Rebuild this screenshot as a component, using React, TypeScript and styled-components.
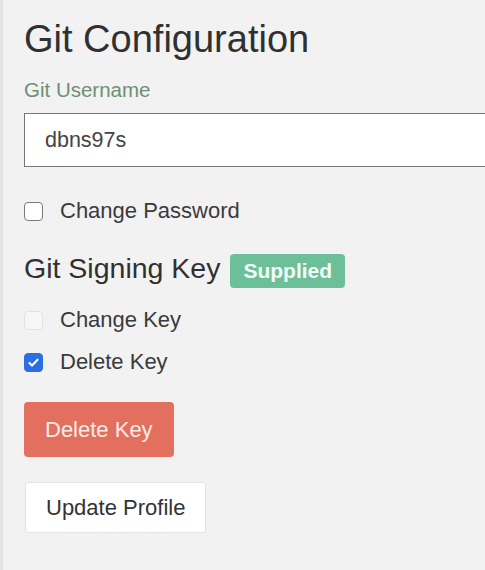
import React from 'react';
import styled, { createGlobalStyle } from 'styled-components';

const GlobalStyle = createGlobalStyle`
  html, body {
    margin: 0;
    padding: 0;
    background: #f2f2f2;
  }
  body {
    font-family: "Liberation Sans", Arial, sans-serif;
    color: #333;
  }
`;

const Page = styled.div`
  min-height: 570px;
  box-sizing: border-box;
  border-left: 3px solid #e3e3e3;
  padding: 17px 0 0 21px;
  display: flex;
  flex-direction: column;
  align-items: flex-start;
  overflow: hidden;
`;

const Title = styled.h1`
  margin: 0;
  font-size: 38px;
  line-height: 44px;
  font-weight: 400;
  color: #303030;
`;

const FieldLabel = styled.label`
  margin-top: 17px;
  font-size: 20.5px;
  line-height: 24px;
  color: #6f8f72;
`;

const TextInput = styled.input`
  margin-top: 11px;
  box-sizing: border-box;
  width: 500px;
  height: 54px;
  padding: 0 20px;
  border: 1.5px solid #6f7d70;
  border-right: none;
  background: #fff;
  font-family: inherit;
  font-size: 21.5px;
  color: #444;
  outline: none;
`;

const CheckRow = styled.label<{ $top: number }>`
  margin-top: ${(p) => p.$top}px;
  display: flex;
  align-items: center;
  gap: 17px;
  font-size: 22px;
  line-height: 26px;
  color: #3a3a3a;
  cursor: pointer;
`;

const Box = styled.span<{ $checked?: boolean; $disabled?: boolean }>`
  width: 19px;
  height: 19px;
  box-sizing: border-box;
  border-radius: 4px;
  display: flex;
  align-items: center;
  justify-content: center;
  border: 1.5px solid
    ${(p) => (p.$checked ? '#2a6ee0' : p.$disabled ? '#e2e2e2' : '#7a7a7a')};
  background: ${(p) => (p.$checked ? '#2a6ee0' : p.$disabled ? '#f7f7f7' : '#fff')};
`;

const SectionHead = styled.div`
  margin-top: 24px;
  display: flex;
  align-items: center;
  gap: 10px;
`;

const SubTitle = styled.h2`
  margin: 0;
  font-size: 28.5px;
  line-height: 34px;
  font-weight: 400;
  color: #303030;
`;

const Badge = styled.span`
  margin-top: 6px;
  height: 34px;
  padding: 0 13px;
  display: inline-flex;
  align-items: center;
  border-radius: 4px;
  background: #6cbf98;
  color: #f2fff8;
  font-weight: 700;
  font-size: 21px;
`;

const Button = styled.button<{ $variant: 'danger' | 'plain'; $top: number }>`
  margin-top: ${(p) => p.$top}px;
  box-sizing: border-box;
  font-family: inherit;
  font-size: 22px;
  cursor: pointer;
  ${(p) =>
    p.$variant === 'danger'
      ? `
    height: 55px;
    padding: 0 21px;
    border: none;
    border-radius: 4px;
    background: #e3705f;
    color: #fdebe4;
  `
      : `
    margin-left: 1px;
    height: 51px;
    padding: 0 20px;
    border: 1px solid #e4e4e4;
    border-radius: 2px;
    background: #fff;
    color: #333;
  `}
`;

function Check() {
  return (
    <svg width="13" height="13" viewBox="0 0 16 16">
      <path d="M3 8.5l3.2 3.2L13 4.5" fill="none" stroke="#fff" strokeWidth="2.6" strokeLinecap="round" strokeLinejoin="round" />
    </svg>
  );
}

function Checkbox(props: { label: string; checked?: boolean; disabled?: boolean; top: number }) {
  return (
    <CheckRow $top={props.top}>
      <Box $checked={props.checked} $disabled={props.disabled}>
        {props.checked && <Check />}
      </Box>
      {props.label}
    </CheckRow>
  );
}

export default function App() {
  return (
    <>
      <GlobalStyle />
      <Page>
        <Title>Git Configuration</Title>
        <FieldLabel>Git Username</FieldLabel>
        <TextInput defaultValue="dbns97s" />
        <Checkbox label="Change Password" top={31} />
        <SectionHead>
          <SubTitle>Git Signing Key</SubTitle>
          <Badge>Supplied</Badge>
        </SectionHead>
        <Checkbox label="Change Key" disabled top={19} />
        <Checkbox label="Delete Key" checked top={16} />
        <Button $variant="danger" $top={27}>Delete Key</Button>
        <Button $variant="plain" $top={25}>Update Profile</Button>
      </Page>
    </>
  );
}
